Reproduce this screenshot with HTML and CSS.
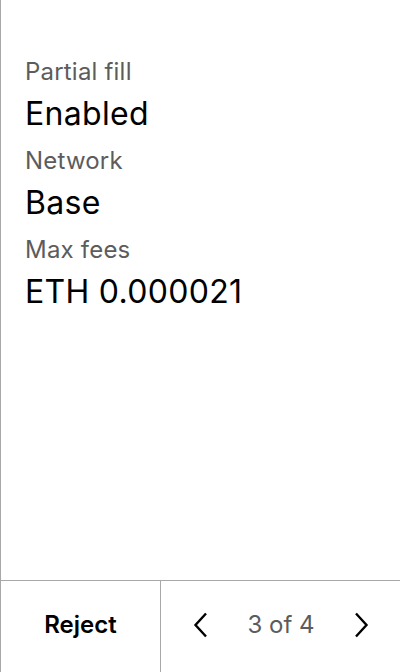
FILE: index.html
```html
<!DOCTYPE html>
<html>
<head>
<meta charset="utf-8">
<link rel="stylesheet" href="styles.css">
</head>
<body>
<div class="screen">
  <div class="content">
    <div class="label">Partial fill</div>
    <div class="value">Enabled</div>
    <div class="label">Network</div>
    <div class="value">Base</div>
    <div class="label">Max fees</div>
    <div class="value">ETH 0.000021</div>
  </div>
  <div class="footer">
    <div class="reject">Reject</div>
    <div class="pager">
      <svg class="chev" width="16" height="26" viewBox="0 0 16 26"><path d="M13 1.5 L2.5 13 L13 24.5" fill="none" stroke="#000" stroke-width="2.4"/></svg>
      <span class="count">3 of 4</span>
      <svg class="chev" width="16" height="26" viewBox="0 0 16 26"><path d="M3 1.5 L13.5 13 L3 24.5" fill="none" stroke="#000" stroke-width="2.4"/></svg>
    </div>
  </div>
</div>
</body>
</html>
```
FILE: styles.css
```css
html, body {
  margin: 0;
  padding: 0;
  background: #fff;
}
body {
  font-family: Inter, "Noto Sans", sans-serif;
  color: #000;
}
.screen {
  width: 400px;
  height: 672px;
  box-sizing: border-box;
  border-left: 1px solid #a8a8a8;
  display: flex;
  flex-direction: column;
}
.content {
  flex: 1;
  padding: 56px 0 0 24px;
}
.label {
  font-size: 24px;
  line-height: 32px;
  color: #5c5c5c;
  letter-spacing: 0.2px;
  margin-bottom: 6px;
}
.value {
  font-size: 32px;
  line-height: 40px;
  color: #000;
  letter-spacing: 0.3px;
  margin-bottom: 11px;
}
.footer {
  height: 91px;
  border-top: 1px solid #a8a8a8;
  display: flex;
}
.reject {
  width: 159px;
  border-right: 1px solid #a8a8a8;
  display: flex;
  align-items: center;
  justify-content: center;
  font-size: 24px;
  font-weight: 600;
  padding-bottom: 4px;
}
.pager {
  flex: 1;
  display: flex;
  align-items: center;
  justify-content: space-between;
  padding: 0 31px 4px 32px;
}
.count {
  font-size: 24px;
  color: #5c5c5c;
}
.chev {
  display: block;
}
```
